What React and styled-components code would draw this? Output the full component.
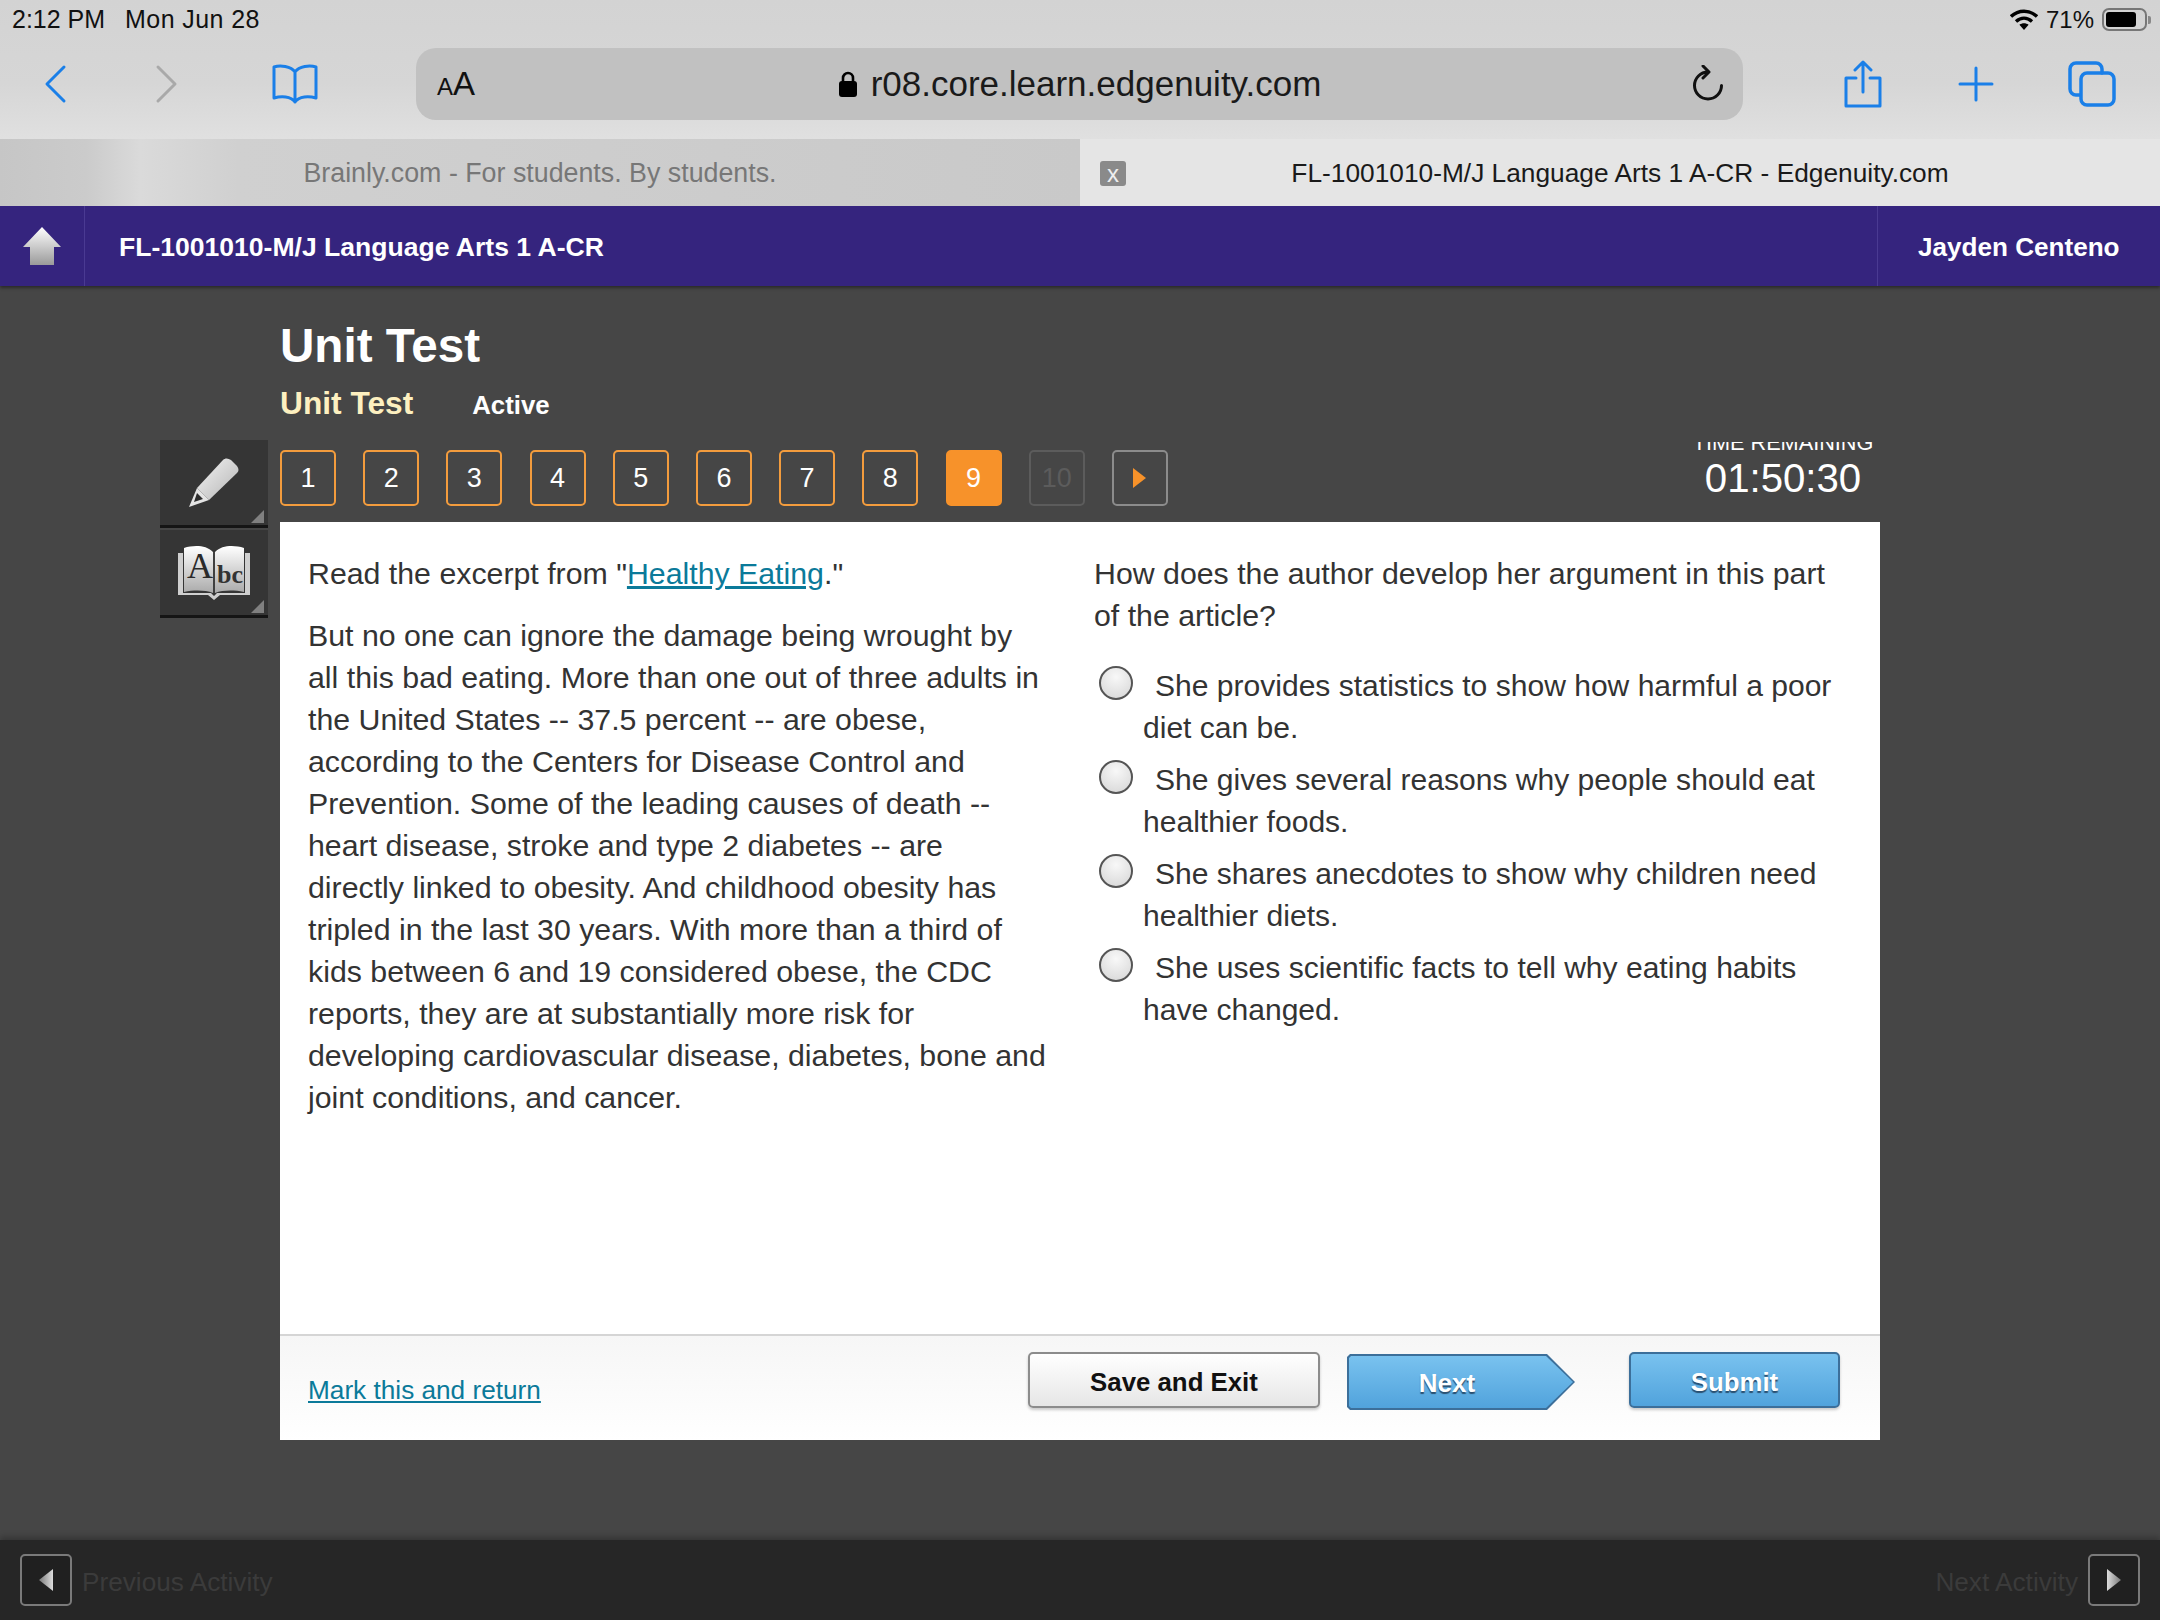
import React from "react";
import styled, { createGlobalStyle } from "styled-components";

const Global = createGlobalStyle`
  html, body { margin: 0; padding: 0; background: #464646; }
  * { box-sizing: border-box; }
  body { font-family: "Liberation Sans", Arial, sans-serif; }
`;
const Screen = styled.div`
  width: 2160px; height: 1620px; overflow: hidden; display: flex; flex-direction: column; background: #464646;
`;
const Chrome = styled.div`
  height: 139px; background: linear-gradient(180deg, #d3d3d3 0%, #d6d6d6 60%, #e0e0e0 100%);
`;
const StatusBar = styled.div`
  height: 38px; display: flex; align-items: center; justify-content: space-between; padding: 1px 13px 0 12px; font-size: 25px; color: #111;
`;
const StatusLeft = styled.div`display: flex; gap: 20px; span:last-child { letter-spacing: .4px; }`;
const StatusRight = styled.div`display: flex; align-items: center; gap: 8px; font-size: 24px;`;
const Battery = styled.div`
  width: 45px; height: 23px; border: 2px solid #777; border-radius: 7px; padding: 2px; position: relative;
  &::before { content: ""; display: block; width: 30px; height: 15px; background: #000; border-radius: 3px; }
  &::after { content: ""; position: absolute; right: -6px; top: 6px; width: 3px; height: 8px; background: #888; border-radius: 0 2px 2px 0; }
`;
const Toolbar = styled.div`
  height: 101px; display: flex; align-items: center; padding: 0 44px 9px 0;
`;
const IconSlot = styled.div`
  display: flex; align-items: center; flex-shrink: 0; margin-left: ${p => p.$ml}px;
`;
const Pill = styled.div`
  width: 1327px; height: 72px; flex-shrink: 0; margin-left: 98px; background: #c1c1c1; border-radius: 20px; display: flex; align-items: center; justify-content: space-between; padding: 0 18px 0 21px; position: relative;
`;
const SmallA = styled.span`font-size: 24px; color: #111; span { font-size: 33px; }`;
const Url = styled.div`
  display: flex; align-items: center; gap: 13px; font-size: 35px; color: #1a1a1a; position: absolute; left: 0; right: 0; justify-content: center;
`;
const TabBar = styled.div`height: 67px; display: flex;`;
const Tab = styled.div`
  width: 1080px; display: flex; align-items: center; justify-content: center; position: relative; padding-top: 2px; font-size: ${p => (p.$active ? 26.3 : 26.8)}px;
  color: ${p => (p.$active ? "#1a1a1a" : "#777")};
  background: ${p => (p.$active ? "#e5e5e5" : "linear-gradient(90deg,#c6c6c6 0%,#cbcbcb 8%,#dadada 13%,#d0d0d0 22%,#c9c9c9 100%)")};
`;
const CloseBox = styled.div`
  position: absolute; left: 20px; top: 22px; width: 26px; height: 25px; border-radius: 3px; background: #8a8a8a; color: #eee; font-size: 24px; line-height: 1; display: flex; align-items: center; justify-content: center;
`;
const Header = styled.header`
  height: 80px; background: #35247e; display: flex; color: #fff; font-weight: 700; align-items: stretch; box-shadow: 0 2px 3px rgba(0,0,0,.4);
`;
const HomeCell = styled.div`
  width: 85px; border-right: 1px solid #4a3a92; display: flex; align-items: center; justify-content: center;
`;
const CourseTitle = styled.div`flex: 1; display: flex; align-items: center; padding: 2px 0 0 34px; font-size: 26.55px;`;
const UserCell = styled.div`
  width: 283px; border-left: 1px solid #4a3a92; display: flex; align-items: center; padding: 2px 0 0 40px; font-size: 26.1px;
`;
const Heading = styled.div`padding: 34px 0 0 280px; height: 154px;`;
const PageTitle = styled.h1`margin: 0; font-size: 47.6px; line-height: 52px; font-weight: 700; color: #fff;`;
const SubRow = styled.div`display: flex; align-items: baseline; gap: 59px; margin-top: 12px;`;
const SubTitle = styled.div`font-size: 31.7px; line-height: 38px; font-weight: 700; color: #fdf0c0;`;
const Status = styled.div`font-size: 25.8px; font-weight: 700; color: #fff;`;
const Workspace = styled.div`display: flex; padding-left: 160px;`;
const Tools = styled.div`width: 108px; margin-right: 12px; display: flex; flex-direction: column; gap: 2px;`;
const ToolBtn = styled.div`
  width: 108px; height: 88px; background: #353535; border-bottom: 3px solid #151515; display: flex; align-items: center; justify-content: center; position: relative;
  &::after { content: ""; position: absolute; right: 4px; bottom: 2px; border-style: solid; border-width: 0 0 13px 13px; border-color: transparent transparent #808080 transparent; }
`;
const Main = styled.div`width: 1600px;`;
const NavRow = styled.div`height: 82px; display: flex; align-items: flex-start; padding: 10px 8px 0 0; position: relative;`;
const QBtn = styled.div`
  width: 56px; height: 56px; margin-right: 27.2px; border-radius: 5px; border: 2px solid ${p => p.$border}; background: ${p => p.$bg || "transparent"}; color: ${p => p.$color}; font-size: 27px; display: flex; align-items: center; justify-content: center;
`;
const Timer = styled.div`
  margin-left: auto; margin-top: -8px; width: 178px; color: #fff; text-align: center; display: flex; flex-direction: column; align-items: center;
`;
const TimerLabel = styled.div`
  height: 13px; overflow: hidden; font-size: 21.7px; line-height: 13px; white-space: nowrap; display: flex; align-items: flex-end;
  span { display: block; line-height: 22px; margin-bottom: 1px; }
`;
const TimerValue = styled.div`font-size: 40.2px; line-height: 48px;`;
const Panel = styled.div`height: 918px; background: #fff; display: flex; flex-direction: column;`;
const PanelBody = styled.div`flex: 1; display: flex; padding: 31px 0 0 28px; font-size: 30.3px; line-height: 42px; color: #333;`;
const LeftCol = styled.div`width: 739px; margin-right: 47px;`;
const RightCol = styled.div`width: 750px;`;
const Para = styled.p`margin: 0 0 20px;`;
const Link = styled.a`color: #0b7a9a; text-decoration: underline;`;
const Options = styled.div`margin-top: 28px; display: flex; flex-direction: column; gap: 10px; font-size: 30.05px;`;
const Option = styled.div`padding-left: 49px;`;
const Radio = styled.span`
  display: inline-block; width: 34px; height: 34px; border-radius: 50%; margin: -8px 22px -8px -44px; vertical-align: 4.4px; border: 2px solid #555;
  background: radial-gradient(circle at 50% 30%, #f8f8f8, #d5d5d5);
`;
const Footer = styled.div`
  height: 106px; border-top: 2px solid #d5d5d5; background: linear-gradient(180deg, #f6f6f6, #fff); position: relative; display: flex; align-items: flex-start; padding: 16px 40px 0 28px;
`;
const MarkLink = styled(Link)`font-size: 26.2px; margin-top: 23px; margin-right: auto;`;
const SaveBtn = styled.div`
  width: 292px; height: 56px; padding-top: 4px; border-radius: 5px; border: 2px solid #8c8c8c; background: linear-gradient(180deg,#fff,#e6e6e6); font-weight: 700; font-size: 25.8px; color: #111; display: flex; align-items: center; justify-content: center; box-shadow: 0 2px 3px rgba(0,0,0,.2);
`;
const NextBtn = styled.div`
  width: 228px; height: 56px; margin: 2px 54px 0 27px; background: #3c6f9a; position: relative; color: #fff; font-weight: 700; font-size: 26px; display: flex; align-items: center; justify-content: center; padding: 2px 28px 0 0; text-shadow: 0 2px 1px #2a4f70;
  clip-path: polygon(0 3px, 3px 0, 200px 0, 228px 28px, 200px 56px, 3px 56px, 0 53px);
  span { position: relative; }
  &::before { content: ""; position: absolute; inset: 2px; background: linear-gradient(180deg,#79c2ef,#51a3dc); clip-path: polygon(0 2px, 2px 0, 197px 0, 224px 26px, 197px 52px, 2px 52px, 0 50px); }
`;
const SubmitBtn = styled.div`
  width: 211px; height: 56px; padding-top: 4px; border-radius: 5px; border: 2px solid #3c6f9a; background: linear-gradient(180deg,#79c2ef,#51a3dc); color: #fff; font-weight: 700; font-size: 25.8px; display: flex; align-items: center; justify-content: center; text-shadow: 0 2px 1px #2a4f70; box-shadow: 0 2px 3px rgba(0,0,0,.2);
`;
const BottomBar = styled.div`
  margin-top: auto; height: 80px; background: #262626; box-shadow: 0 -3px 6px rgba(0,0,0,.25); display: flex; align-items: center; justify-content: space-between; padding: 2px 20px 0;
`;
const Side = styled.div`display: flex; align-items: center; gap: 10px;`;
const ArrowBox = styled.div`
  width: 52px; height: 52px; border: 2px solid #7a7a7a; border-radius: 5px; background: #202020; display: flex; align-items: center; justify-content: center; margin-top: -2px;
`;
const Dim = styled.span`font-size: 26.2px; color: #3b3b3b; padding-top: 3px;`;

const blue = "#1a7fe8";
const Stroke = ({ w, h, vb, children, color = blue, sw = 3 }) => (
  <svg width={w} height={h} viewBox={vb || `0 0 ${w} ${h}`} fill="none" stroke={color} strokeWidth={sw} strokeLinecap="round" strokeLinejoin="round">{children}</svg>
);

const Wifi = () => (
  <svg width="28" height="21" viewBox="0 0 28 21">
    <path d="M1 7.5C8.5.5 19.5.5 27 7.5" fill="none" stroke="#000" strokeWidth="3.4" />
    <path d="M6 12.5c5-4.4 11-4.4 16 0" fill="none" stroke="#000" strokeWidth="3.4" />
    <path d="M14 21l-4.6-5.2c2.8-2 6.4-2 9.2 0z" fill="#000" />
  </svg>
);
const Lock = () => (
  <svg width="20" height="26" viewBox="0 0 20 26">
    <path d="M5 11V7a5 5 0 0 1 10 0v4" fill="none" stroke="#000" strokeWidth="2.6" />
    <rect x="1" y="10" width="18" height="16" rx="3" fill="#000" />
  </svg>
);
const HomeIcon = () => (
  <svg width="38" height="38" viewBox="0 0 38 38">
    <defs><linearGradient id="hg" x1="0" y1="0" x2="0" y2="1"><stop offset="0" stopColor="#fff" /><stop offset="1" stopColor="#9a9a9a" /></linearGradient></defs>
    <path d="M19 0L38 20H31V38H7V20H0z" fill="url(#hg)" />
  </svg>
);
const Pencil = () => (
  <svg width="50" height="49" viewBox="0 0 50 49">
    <defs><linearGradient id="pg" x1="0" y1="0" x2="1" y2="1"><stop offset="0" stopColor="#f4f4f4" /><stop offset="1" stopColor="#b4b4b4" /></linearGradient></defs>
    <path d="M34 2c2-2 5-2 8 0l6 6c2 3 2 5 0 7L20 42 8 30z" fill="url(#pg)" />
    <path d="M8 30l12 12-20 7z" fill="#e4e4e4" />
    <path d="M8 35l6 6-9 3z" fill="#2c2c2c" />
  </svg>
);
const BookIcon = () => (
  <svg width="72" height="56" viewBox="0 0 72 56">
    <defs><linearGradient id="bg" x1="0" y1="0" x2="0" y2="1"><stop offset="0" stopColor="#fff" /><stop offset="1" stopColor="#aaa" /></linearGradient></defs>
    <path d="M0 8h5v40h28l3 3 3-3h28V8h5v42H42l-6 5-6-5H0z" fill="#cfcfcf" />
    <path d="M6 3c10-3 22-3 29 4v41c-8-3-19-3-29-1z" fill="url(#bg)" />
    <path d="M37 7c7-7 19-7 29-4v44c-10-2-21-2-29 1z" fill="url(#bg)" />
    <text x="9" y="33" fontFamily="Liberation Serif, serif" fontSize="36" fill="#2a2a2a">A</text>
    <text x="39" y="38" fontFamily="Liberation Serif, serif" fontSize="26" fontWeight="700" fill="#333">bc</text>
    <path d="M36 7v41" stroke="#444" strokeWidth="1.5" />
  </svg>
);
const Tri = ({ dir }) => (
  <svg width="14" height="22" viewBox="0 0 14 22">
    <defs><linearGradient id={`t${dir}`} x1="0" y1="0" x2="1" y2="0"><stop offset="0" stopColor={dir === "l" ? "#777" : "#ddd"} /><stop offset="1" stopColor={dir === "l" ? "#ddd" : "#777"} /></linearGradient></defs>
    <path d={dir === "l" ? "M14 0V22L0 11z" : "M0 0V22L14 11z"} fill={`url(#t${dir})`} />
  </svg>
);

const nums = [1, 2, 3, 4, 5, 6, 7, 8];
const options = [
  "She provides statistics to show how harmful a poor diet can be.",
  "She gives several reasons why people should eat healthier foods.",
  "She shares anecdotes to show why children need healthier diets.",
  "She uses scientific facts to tell why eating habits have changed.",
];

export default function App() {
  return (
    <Screen>
      <Global />
      <Chrome>
        <StatusBar>
          <StatusLeft><span>2:12 PM</span><span>Mon Jun 28</span></StatusLeft>
          <StatusRight><Wifi /><span>71%</span><Battery /></StatusRight>
        </StatusBar>
        <Toolbar>
          <IconSlot $ml={43}>
            <Stroke w={24} h={40}><path d="M21 3L4 20l17 17" /></Stroke>
          </IconSlot>
          <IconSlot $ml={88}>
            <Stroke w={24} h={40} color="#a9a9a9"><path d="M3 3l17 17L3 37" /></Stroke>
          </IconSlot>
          <IconSlot $ml={93}>
            <Stroke w={46} h={40} vb="0 0 46 40"><path d="M23 8C19 2 8 1 2 3v31c7-2 17-2 21 4 4-6 14-6 21-4V3c-6-2-17-1-21 5zM23 8v30" /></Stroke>
          </IconSlot>
          <Pill>
            <SmallA>A<span>A</span></SmallA>
            <Url><Lock /><span>r08.core.learn.edgenuity.com</span></Url>
            <Stroke w={34} h={38} color="#111" sw={3}><path d="M17 7A13.5 13.5 0 1 0 30.5 20.5M12 1l6 6-6 6" /></Stroke>
          </Pill>
          <IconSlot $ml={101}>
            <Stroke w={38} h={48}><path d="M19 32V2M11 10l8-8 8 8M12 18H2v28h34V18H26" /></Stroke>
          </IconSlot>
          <IconSlot $ml={76}>
            <Stroke w={36} h={36}><path d="M18 2v32M2 18h32" /></Stroke>
          </IconSlot>
          <IconSlot $ml={74}>
            <Stroke w={48} h={46} sw={3.5}>
              <path d="M12 34H8a6 6 0 0 1-6-6V8a6 6 0 0 1 6-6h20a6 6 0 0 1 6 6v4" />
              <rect x="13" y="12" width="33" height="32" rx="6" />
            </Stroke>
          </IconSlot>
        </Toolbar>
      </Chrome>
      <TabBar>
        <Tab>Brainly.com - For students. By students.</Tab>
        <Tab $active><CloseBox>x</CloseBox>FL-1001010-M/J Language Arts 1 A-CR - Edgenuity.com</Tab>
      </TabBar>
      <Header>
        <HomeCell><HomeIcon /></HomeCell>
        <CourseTitle>FL-1001010-M/J Language Arts 1 A-CR</CourseTitle>
        <UserCell>Jayden Centeno</UserCell>
      </Header>
      <Heading>
        <PageTitle>Unit Test</PageTitle>
        <SubRow><SubTitle>Unit Test</SubTitle><Status>Active</Status></SubRow>
      </Heading>
      <Workspace>
        <Tools>
          <ToolBtn><Pencil /></ToolBtn>
          <ToolBtn><BookIcon /></ToolBtn>
        </Tools>
        <Main>
          <NavRow>
            {nums.map(n => <QBtn key={n} $border="#f39c3d" $color="#fff">{n}</QBtn>)}
            <QBtn $border="#f7922a" $bg="#f7922a" $color="#fff">9</QBtn>
            <QBtn $border="#5c5c5c" $color="#5c5c5c">10</QBtn>
            <QBtn $border="#8c8c8c" $color="#f7922a">
              <svg width="13" height="20" viewBox="0 0 13 20"><path d="M0 0L13 10 0 20z" fill="#f7922a" /></svg>
            </QBtn>
            <Timer>
              <TimerLabel><span>TIME REMAINING</span></TimerLabel>
              <TimerValue>01:50:30</TimerValue>
            </Timer>
          </NavRow>
          <Panel>
            <PanelBody>
              <LeftCol>
                <Para>Read the excerpt from "<Link>Healthy Eating</Link>."</Para>
                <Para>But no one can ignore the damage being wrought by all this bad eating. More than one out of three adults in the United States -- 37.5 percent -- are obese, according to the Centers for Disease Control and Prevention. Some of the leading causes of death -- heart disease, stroke and type 2 diabetes -- are directly linked to obesity. And childhood obesity has tripled in the last 30 years. With more than a third of kids between 6 and 19 considered obese, the CDC reports, they are at substantially more risk for developing cardiovascular disease, diabetes, bone and joint conditions, and cancer.</Para>
              </LeftCol>
              <RightCol>
                <div>How does the author develop her argument in this part of the article?</div>
                <Options>
                  {options.map(o => <Option key={o}><Radio />{o}</Option>)}
                </Options>
              </RightCol>
            </PanelBody>
            <Footer>
              <MarkLink>Mark this and return</MarkLink>
              <SaveBtn>Save and Exit</SaveBtn>
              <NextBtn><span>Next</span></NextBtn>
              <SubmitBtn>Submit</SubmitBtn>
            </Footer>
          </Panel>
        </Main>
      </Workspace>
      <BottomBar>
        <Side><ArrowBox><Tri dir="l" /></ArrowBox><Dim>Previous Activity</Dim></Side>
        <Side><Dim>Next Activity</Dim><ArrowBox><Tri dir="r" /></ArrowBox></Side>
      </BottomBar>
    </Screen>
  );
}
